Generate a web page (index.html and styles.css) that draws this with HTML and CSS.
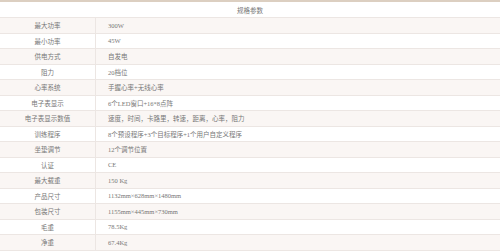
FILE: index.html
```html
<!DOCTYPE html>
<html lang="zh">
<head>
<meta charset="utf-8">
<title>规格参数</title>
<link rel="stylesheet" href="styles.css">
</head>
<body>
<table class="spec">
  <thead>
    <tr><th colspan="2" class="spec-title">规格参数</th></tr>
  </thead>
  <tbody>
    <tr><td class="k">最大功率</td><td class="v">300W</td></tr>
    <tr><td class="k">最小功率</td><td class="v">45W</td></tr>
    <tr><td class="k">供电方式</td><td class="v">自发电</td></tr>
    <tr><td class="k">阻力</td><td class="v">20档位</td></tr>
    <tr><td class="k">心率系统</td><td class="v">手握心率+无线心率</td></tr>
    <tr><td class="k">电子表显示</td><td class="v">6个LED窗口+16*8点阵</td></tr>
    <tr><td class="k">电子表显示数值</td><td class="v">速度，时间，卡路里，转速，距离，心率，阻力</td></tr>
    <tr><td class="k">训练程序</td><td class="v">8个预设程序+3个目标程序+1个用户自定义程序</td></tr>
    <tr><td class="k">坐垫调节</td><td class="v">12个调节位置</td></tr>
    <tr><td class="k">认证</td><td class="v">CE</td></tr>
    <tr><td class="k">最大载重</td><td class="v">150 Kg</td></tr>
    <tr><td class="k">产品尺寸</td><td class="v">1132mm×628mm×1480mm</td></tr>
    <tr><td class="k">包装尺寸</td><td class="v">1155mm×445mm×730mm</td></tr>
    <tr><td class="k">毛重</td><td class="v">78.5Kg</td></tr>
    <tr><td class="k">净重</td><td class="v">67.4Kg</td></tr>
  </tbody>
</table>
</body>
</html>
```
FILE: styles.css
```css
html, body {
  margin: 0;
  padding: 0;
  background: #ffffff;
}
.spec {
  width: 100%;
  border-collapse: collapse;
  border-top: 2px solid #dccfc1;
  font-family: "Liberation Serif", "Noto Sans CJK SC", serif;
  font-size: 6.5px;
  color: #777777;
}
.spec th,
.spec td {
  padding: 0;
  font-weight: normal;
  border-bottom: 1px solid #ece6e3;
}
.spec-title {
  height: 15px;
  text-align: center;
}
.spec tbody tr {
  height: 15.5px;
}
.spec tbody tr:nth-child(odd) {
  background: #faf6f4;
}
.k {
  width: 95px;
  text-align: center;
  border-right: 1px solid #ece6e3;
}
.v {
  padding-left: 12px !important;
  text-align: left;
}
```
